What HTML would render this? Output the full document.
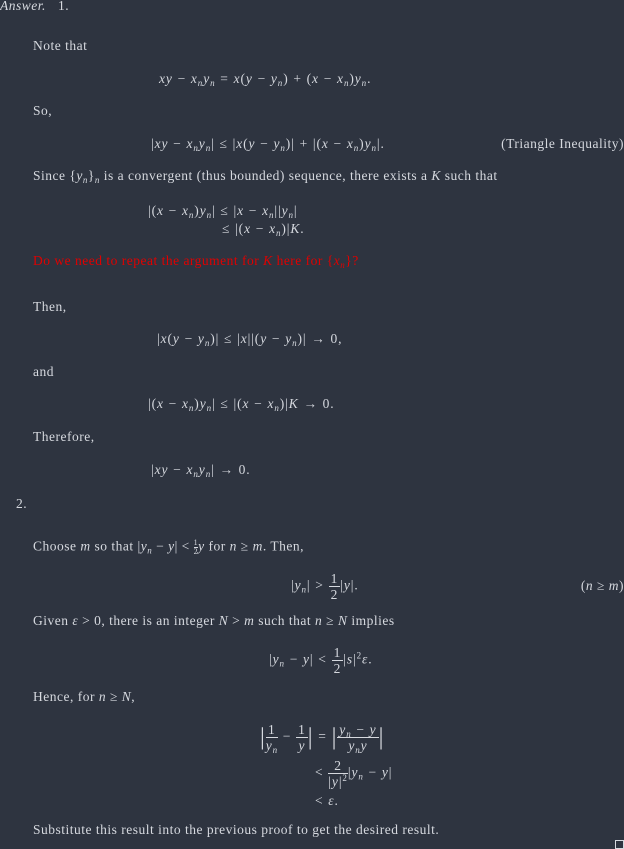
<!DOCTYPE html>
<html><head><meta charset="utf-8"><style>
html,body{margin:0;padding:0;}
body{width:624px;height:849px;background:#2e3440;color:#d6d9df;font-family:"Liberation Serif",serif;font-size:13.5px;letter-spacing:0.5px;position:relative;overflow:hidden;}
.l{position:absolute;white-space:nowrap;line-height:14px;}
.m{letter-spacing:0.9px;word-spacing:0.5px;}
i{font-style:italic;}
sub{font-size:9px;vertical-align:-3px;line-height:0;font-style:italic;}
sup{font-size:9px;vertical-align:5px;line-height:0;}
.red{color:#e00000;}
.fr{display:inline-block;vertical-align:middle;text-align:center;line-height:15px;}
.fr span{display:block;}
.fr .n{border-bottom:1px solid #d6d9df;padding:0 2px;}
.sfr{display:inline-block;vertical-align:middle;text-align:center;font-size:8px;line-height:8px;}
.sfr span{display:block}
.sfr .n{border-bottom:1px solid #d6d9df;}
.bar{font-size:24px;vertical-align:middle;}
</style></head><body>
<div class="l" style="left:0;top:-1px"><i>Answer.</i></div>
<div class="l" style="left:58px;top:-1px">1.</div>
<div class="l" style="left:33px;top:39px">Note that</div>
<div class="l m" style="left:159px;top:72px"><i>xy</i> − <i>x</i><sub>n</sub><i>y</i><sub>n</sub> = <i>x</i>(<i>y</i> − <i>y</i><sub>n</sub>) + (<i>x</i> − <i>x</i><sub>n</sub>)<i>y</i><sub>n</sub>.</div>
<div class="l" style="left:33px;top:104px">So,</div>
<div class="l m" style="left:151px;top:137px">|<i>xy</i> − <i>x</i><sub>n</sub><i>y</i><sub>n</sub>| ≤ |<i>x</i>(<i>y</i> − <i>y</i><sub>n</sub>)| + |(<i>x</i> − <i>x</i><sub>n</sub>)<i>y</i><sub>n</sub>|.</div>
<div class="l" style="right:0;top:137px">(Triangle Inequality)</div>
<div class="l" style="left:33px;top:169px">Since {<i>y</i><sub>n</sub>}<sub>n</sub> is a convergent (thus bounded) sequence, there exists a <i>K</i> such that</div>
<div class="l m" style="left:148px;top:204px">|(<i>x</i> − <i>x</i><sub>n</sub>)<i>y</i><sub>n</sub>| ≤ |<i>x</i> − <i>x</i><sub>n</sub>||<i>y</i><sub>n</sub>|</div>
<div class="l m" style="left:222px;top:222px">≤ |(<i>x</i> − <i>x</i><sub>n</sub>)|<i>K</i>.</div>
<div class="l red" style="left:33px;top:254px">Do we need to repeat the argument for <i>K</i> here for {<i>x</i><sub>n</sub>}?</div>
<div class="l" style="left:33px;top:300px">Then,</div>
<div class="l m" style="left:157px;top:332px">|<i>x</i>(<i>y</i> − <i>y</i><sub>n</sub>)| ≤ |<i>x</i>||(<i>y</i> − <i>y</i><sub>n</sub>)| → 0,</div>
<div class="l" style="left:33px;top:365px">and</div>
<div class="l m" style="left:148px;top:397px">|(<i>x</i> − <i>x</i><sub>n</sub>)<i>y</i><sub>n</sub>| ≤ |(<i>x</i> − <i>x</i><sub>n</sub>)|<i>K</i> → 0.</div>
<div class="l" style="left:33px;top:430px">Therefore,</div>
<div class="l m" style="left:151px;top:463px">|<i>xy</i> − <i>x</i><sub>n</sub><i>y</i><sub>n</sub>| → 0.</div>
<div class="l" style="left:16px;top:497px">2.</div>
<div class="l" style="left:33px;top:539px">Choose <i>m</i> so that |<i>y</i><sub>n</sub> − <i>y</i>| &lt; <span class="sfr"><span class="n">1</span><span>2</span></span><i>y</i> for <i>n</i> ≥ <i>m</i>. Then,</div>
<div class="l m" style="left:291px;top:571px">|<i>y</i><sub>n</sub>| &gt; <span class="fr"><span class="n">1</span><span>2</span></span>|<i>y</i>|.</div>
<div class="l" style="right:0;top:579px">(<i>n</i> ≥ <i>m</i>)</div>
<div class="l" style="left:33px;top:614px">Given <i>ε</i> &gt; 0, there is an integer <i>N</i> &gt; <i>m</i> such that <i>n</i> ≥ <i>N</i> implies</div>
<div class="l m" style="left:269px;top:645px">|<i>y</i><sub>n</sub> − <i>y</i>| &lt; <span class="fr"><span class="n">1</span><span>2</span></span>|<i>s</i>|<sup>2</sup><i>ε</i>.</div>
<div class="l" style="left:33px;top:690px">Hence, for <i>n</i> ≥ <i>N</i>,</div>
<div class="l m" style="left:260px;top:722px"><span class="bar">|</span><span class="fr"><span class="n">1</span><span><i>y</i><sub>n</sub></span></span> − <span class="fr"><span class="n">1</span><span><i>y</i></span></span><span class="bar">|</span> = <span class="bar">|</span><span class="fr"><span class="n"><i>y</i><sub>n</sub> − <i>y</i></span><span><i>y</i><sub>n</sub><i>y</i></span></span><span class="bar">|</span></div>
<div class="l m" style="left:315px;top:758px">&lt; <span class="fr"><span class="n">2</span><span>|<i>y</i>|<sup>2</sup></span></span>|<i>y</i><sub>n</sub> − <i>y</i>|</div>
<div class="l m" style="left:315px;top:794px">&lt; <i>ε</i>.</div>
<div class="l" style="left:33px;top:823px">Substitute this result into the previous proof to get the desired result.</div>
<div style="position:absolute;left:615px;top:840px;width:7px;height:7px;border:1px solid #d6d9df"></div>
</body></html>
